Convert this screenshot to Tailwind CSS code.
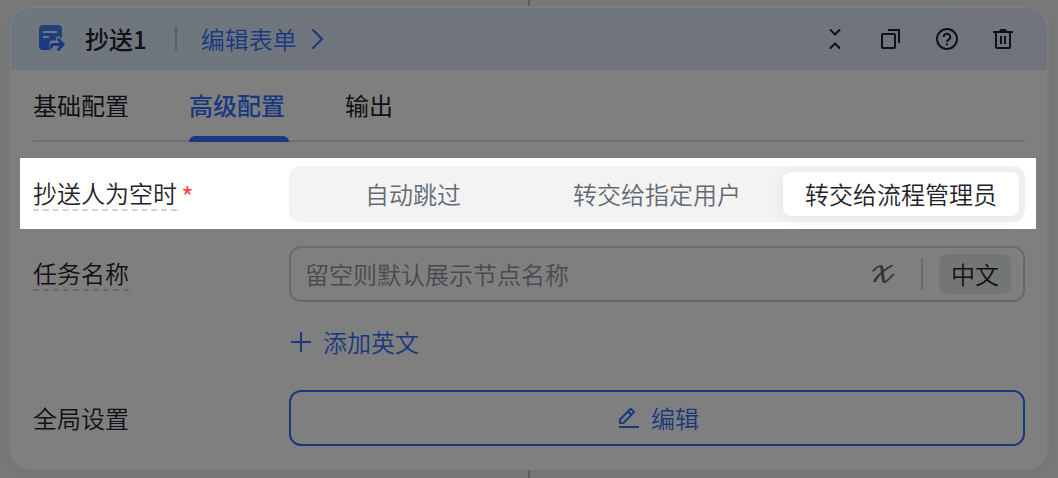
<!DOCTYPE html>
<html lang="zh-CN">
  <head>
    <meta charset="UTF-8" />
    <meta name="viewport" content="width=device-width, initial-scale=1.0" />
    <script src="https://cdn.jsdelivr.net/npm/@tailwindcss/browser@4"></script>
    <title>抄送1</title>
  </head>
  <body class="min-h-screen flex flex-col overflow-hidden bg-[#f1f2f4] text-2xl/8 text-[#1f2329] font-[350] font-['Noto_Sans_CJK_SC',sans-serif]">

    <div class="w-[2px] h-[6px] mx-auto bg-[#bbbfc4]"></div>

    <main class="mx-[9px] border-2 border-[#f8f8f8] border-b-white rounded-[22px] bg-white shadow-[0_4px_16px_rgba(31,35,41,0.06)]">
      <header class="flex items-center justify-between h-[62px] pl-7 pr-8 rounded-t-[20px] bg-linear-to-r from-[#e0edfc] to-[#e1e7fd]">
        <div class="flex items-center">
          <svg class="w-[27px] h-7" viewBox="0 0 27 28" fill="none">
            <defs>
              <linearGradient id="docFill" x1="0" y1="0" x2="0" y2="1">
                <stop offset="0" stop-color="#3f8bf0" />
                <stop offset="1" stop-color="#3370ff" />
              </linearGradient>
            </defs>
            <path fill="url(#docFill)" d="M4 0h15a4 4 0 0 1 4 4v9.500l-2-1.700a2.500 2.500 0 0 0-4 2v1.700h-3.500a3 3 0 0 0-3 3v3a3 3 0 0 0 2.500 3.500H4a4 4 0 0 1-4-4V4a4 4 0 0 1 4-4z" />
            <path stroke="#e0edfc" stroke-width="2" d="M4 7h14M4 12h6" />
            <path stroke="#3370ff" stroke-width="3" stroke-linecap="round" stroke-linejoin="round" d="M12.500 22v-1q0-1.500 1.500-1.500H24M19.500 14.500l4.700 5-4.700 5" />
          </svg>
          <h1 class="ml-[19px] font-medium">抄送1</h1>
          <span class="w-[2px] h-6 ml-7 mr-6 bg-[#bbbfc4]"></span>
          <a href="#" class="flex items-center gap-3.5 text-[#3370ff]">
            编辑表单
            <svg class="w-3.5 h-6" viewBox="0 0 14 24" fill="none" stroke="currentColor" stroke-width="2" stroke-linecap="round" stroke-linejoin="round">
              <path d="M2 3l9 9-9 9" />
            </svg>
          </a>
        </div>

        <div class="flex items-center gap-8">
          <button type="button" aria-label="收起">
            <svg class="w-6 h-6" viewBox="0 0 24 24" fill="none" stroke="currentColor" stroke-width="2" stroke-linecap="round" stroke-linejoin="round">
              <path d="M7.500 3l4.500 4.500L16.500 3M7.500 21l4.500-4.500 4.500 4.500" />
            </svg>
          </button>
          <button type="button" aria-label="复制">
            <svg class="w-6 h-6" viewBox="0 0 24 24" fill="none" stroke="currentColor" stroke-width="2" stroke-linejoin="round">
              <rect x="3" y="7" width="13" height="14" rx="1" />
              <path stroke-linejoin="miter" d="M9 3h11v13" />
            </svg>
          </button>
          <button type="button" aria-label="帮助">
            <svg class="w-6 h-6" viewBox="0 0 24 24" fill="none" stroke="currentColor" stroke-width="2">
              <circle cx="12" cy="12" r="10" />
              <path d="M8.800 10a3.200 3.200 0 1 1 4.800 2.700q-1.600.9-1.600 2.300" />
              <path d="M12 16.300v2" />
            </svg>
          </button>
          <button type="button" aria-label="删除">
            <svg class="w-6 h-6" viewBox="0 0 24 24" fill="none" stroke="currentColor" stroke-width="2">
              <path d="M2 5h20M5 5v15a1 1 0 0 0 1 1h12a1 1 0 0 0 1-1V5M10 9v8M14 9v8" />
              <path fill="currentColor" stroke="none" d="M8 4l1.500-2h5L16 4z" />
            </svg>
          </button>
        </div>
      </header>

      <nav class="flex gap-14 h-[72px] mx-[22px] border-b-2 border-[#dee0e3] font-normal">
        <button type="button" class="w-[100px] text-left">基础配置</button>
        <button type="button" class="relative w-[100px] text-left font-medium text-[#3370ff]">
          高级配置
          <span class="absolute left-0 -bottom-[2px] w-full h-[6px] rounded-t-[6px] bg-[#3370ff]"></span>
        </button>
        <button type="button" class="w-[100px] text-left">输出</button>
      </nav>

      <!-- highlighted step of the guide, its shadow dims the rest of the page -->
      <fieldset class="relative z-10 ml-[9px] mr-[11px] mt-4 pl-[13px] pr-[11px] h-[71px] flex items-center bg-white shadow-[0_0_0_9999px_rgba(0,0,0,0.5)]" aria-labelledby="emptyLabel">
        <div class="w-64 shrink-0 flex items-center gap-1">
          <span id="emptyLabel" class="border-b-2 border-dashed border-[#d0d3d6]">抄送人为空时</span>
          <span class="pt-1 text-[28px]/8 text-[#f54a45]">*</span>
        </div>
        <div class="grow grid grid-cols-3 gap-2 h-14 p-[6px] rounded-xl bg-[#f3f3f3] text-[#646a73]">
          <label class="relative flex items-center justify-center rounded-lg has-checked:bg-white has-checked:text-[#1f2329] has-checked:shadow-[0_2px_16px_rgba(31,35,41,0.08)]">
            <input type="radio" name="empty" class="sr-only" />自动跳过
          </label>
          <label class="relative flex items-center justify-center rounded-lg has-checked:bg-white has-checked:text-[#1f2329] has-checked:shadow-[0_2px_16px_rgba(31,35,41,0.08)]">
            <input type="radio" name="empty" class="sr-only" />转交给指定用户
          </label>
          <label class="relative flex items-center justify-center rounded-lg has-checked:bg-white has-checked:text-[#1f2329] has-checked:shadow-[0_2px_16px_rgba(31,35,41,0.08)]">
            <input type="radio" name="empty" class="sr-only" checked />转交给流程管理员
          </label>
        </div>
      </fieldset>

      <div class="mx-[22px] mt-[17px] flex items-center">
        <div class="w-64 shrink-0 flex">
          <label for="taskName" class="border-b-2 border-dashed border-[#d0d3d6]">任务名称</label>
        </div>
        <div class="grow flex items-center h-14 pl-3.5 pr-3 border-2 border-[#d0d3d6] rounded-xl">
          <input id="taskName" type="text" placeholder="留空则默认展示节点名称" class="grow min-w-0 outline-none placeholder:text-[#8f959e]" />
          <button type="button" aria-label="插入变量" class="pb-[2px] text-[32px]/8 text-[#646a73] font-['DejaVu_Math_TeX_Gyre','Liberation_Serif',serif]">𝓍</button>
          <span class="w-[2px] h-8 ml-6 mr-4 bg-[#d0d3d6]"></span>
          <button type="button" class="h-10 px-3 rounded-lg bg-[#e8edeb]">中文</button>
        </div>
      </div>

      <div class="ml-[278px] mt-6 flex">
        <button type="button" class="flex items-center gap-2.5 text-[#3370ff]">
          <svg class="w-6 h-6" viewBox="0 0 24 24" fill="none" stroke="currentColor" stroke-width="2">
            <path d="M12 2v20M2 12h20" />
          </svg>
          添加英文
        </button>
      </div>

      <div class="mx-[22px] mt-8 mb-[22px] flex items-center">
        <span id="globalLabel" class="w-64 shrink-0">全局设置</span>
        <button type="button" aria-describedby="globalLabel" class="grow flex items-center justify-center gap-3 h-14 border-2 border-[#3370ff] rounded-xl text-[#3370ff]">
          <svg class="w-6 h-6" viewBox="0 0 24 24" fill="none" stroke="currentColor" stroke-width="2" stroke-linejoin="round">
            <path d="M5 17v-3.500L15.700 2.800l3.300 3.300L8.500 17zM13 5.500l3.300 3.300" />
            <path d="M4 21h20" />
          </svg>
          编辑
        </button>
      </div>
    </main>

    <div class="w-[2px] grow mx-auto bg-[#bbbfc4]"></div>

  </body>
</html>
